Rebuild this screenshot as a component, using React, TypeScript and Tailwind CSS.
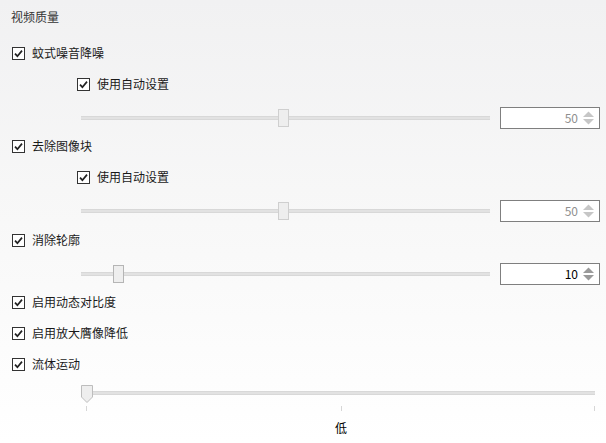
import React from 'react';

const font = { fontFamily: '"Noto Sans CJK SC", "Noto Sans", sans-serif' };

function CheckBox({ label, indent = false }: { label: string; indent?: boolean }) {
    return (
        <div className={`h-[22px] flex items-center ${indent ? 'pl-[77px]' : 'pl-[12px]'}`}>
            <div className="w-[13px] h-[13px] border border-[#333] bg-white flex items-center justify-center">
                <svg width="11" height="11" viewBox="0 0 11 11">
                    <path d="M2 5.6 L4.4 8.2 L9 2.6" fill="none" stroke="#222" strokeWidth="1.7" />
                </svg>
            </div>
            <span className="ml-[7px] text-[12px] text-[#1a1a1a] leading-none">{label}</span>
        </div>
    );
}

function Spinner({ value, disabled }: { value: number; disabled: boolean }) {
    const arrow = disabled ? '#c6c6c6' : '#9a9a9a';
    return (
        <div className="ml-[10px] w-[100px] h-[22px] border border-[#7f7f7f] bg-white flex items-center justify-end pr-[4px]">
            <span className={`text-[12px] leading-none ${disabled ? 'text-[#8f8f8f]' : 'text-black'}`}>{value}</span>
            <svg width="13" height="16" viewBox="0 0 13 16" className="ml-[4px]">
                <path d="M1 7 L6.5 1.5 L12 7 Z" fill={arrow} />
                <path d="M1 9 L6.5 14.5 L12 9 Z" fill={arrow} />
            </svg>
        </div>
    );
}

function Slider({ pos, value, disabled }: { pos: number; value: number; disabled: boolean }) {
    return (
        <div className="h-[22px] flex items-center pl-[81px]">
            <div className="relative w-[409px] h-[4px] bg-[#e2e2e2] border-y border-[#d8d8d8]">
                <div
                    className={`absolute top-[-8px] w-[11px] h-[18px] bg-[#eeeeee] border ${disabled ? 'border-[#cfcfcf]' : 'border-[#b5b5b5]'}`}
                    style={{ left: pos }}
                />
            </div>
            <Spinner value={value} disabled={disabled} />
        </div>
    );
}

export default function App() {
    return (
        <div className="w-[606px] h-[443px] bg-linear-to-b from-[#f1f1f2] via-[#f8f8f8] to-white overflow-hidden" style={font}>
            <div className="flex flex-col">
                <div className="mt-[6px] h-[22px] flex items-center pl-[11px] text-[12px] text-[#333] leading-none">视频质量</div>

                <div className="mt-[14px]"><CheckBox label="蚊式噪音降噪" /></div>
                <div className="mt-[9px]"><CheckBox label="使用自动设置" indent /></div>
                <div className="mt-[12px]"><Slider pos={197} value={50} disabled /></div>

                <div className="mt-[6px]"><CheckBox label="去除图像块" /></div>
                <div className="mt-[9px]"><CheckBox label="使用自动设置" indent /></div>
                <div className="mt-[12px]"><Slider pos={197} value={50} disabled /></div>

                <div className="mt-[7px]"><CheckBox label="消除轮廓" /></div>
                <div className="mt-[12px]"><Slider pos={32} value={10} disabled={false} /></div>

                <div className="mt-[6px]"><CheckBox label="启用动态对比度" /></div>
                <div className="mt-[9px]"><CheckBox label="启用放大膺像降低" /></div>
                <div className="mt-[9px]"><CheckBox label="流体运动" /></div>

                {/* fluid motion slider */}
                <div className="mt-[8px] pl-[81px]">
                    <div className="h-[20px] flex items-center">
                        <div className="relative w-[514px] h-[4px] bg-[#e2e2e2] border-y border-[#d8d8d8]">
                            <svg width="12" height="18" viewBox="0 0 12 18" className="absolute left-0 top-[-7px]">
                                <path d="M0.5 0.5 H11.5 V12 L6 17.5 L0.5 12 Z" fill="#eeeeee" stroke="#bdbdbd" />
                            </svg>
                        </div>
                    </div>
                    <div className="relative w-[514px] h-[8px]">
                        <div className="absolute left-[5px] top-[3px] w-px h-[5px] bg-[#d6d6d6]" />
                        <div className="absolute left-[260px] top-[3px] w-px h-[5px] bg-[#d6d6d6]" />
                        <div className="absolute left-[513px] top-[3px] w-px h-[5px] bg-[#d6d6d6]" />
                    </div>
                    <div className="w-[520px] flex justify-center mt-[11px] text-[12px] text-black leading-none">低</div>
                </div>
            </div>
        </div>
    );
}
